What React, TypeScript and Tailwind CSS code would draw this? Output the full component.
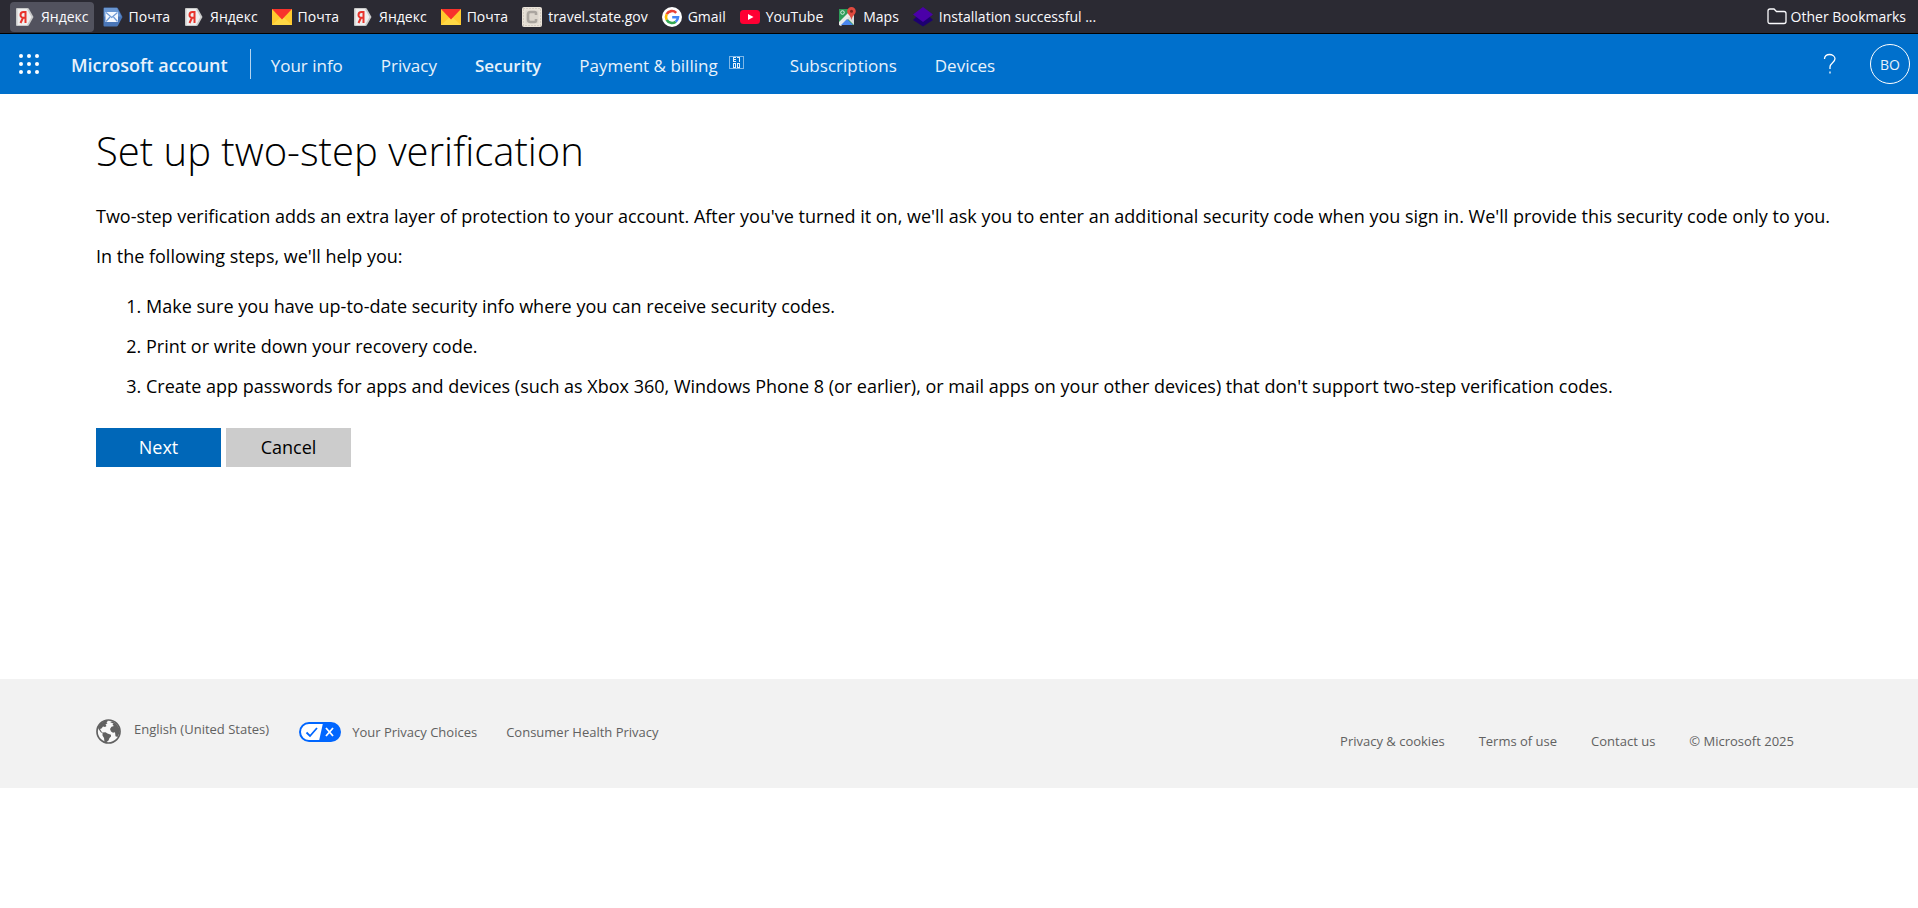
import type { ReactNode } from "react";

const Yandex = () => (
  <svg viewBox="0 0 20 20" className="size-5">
    <path d="M2 1h10.500q1 0 1.500 1l4.500 8-4.500 8q-.5 1-1.500 1H2q-1 0-1-1V2q0-1 1-1Z" fill="#c9c9c9" />
    <path d="M2.500 2h9.500l4.500 8-4.500 8H2.500Z" fill="#efefef" />
    <path d="M10.500 4v12M10.500 5H8.500C4.500 5 4.500 10.800 8.500 10.800h2M8 10.800 5.500 16" fill="none" stroke="#e8332c" strokeWidth="2" />
  </svg>
);
const BlueMail = () => (
  <svg viewBox="0 0 20 20" className="size-5">
    <path d="M1.500 0.500h12q1 0 1.500 1l4.500 8.500L15 18.500q-.5 1-1.500 1h-12q-1 0-1-1v-17q0-1 1-1Z" fill="#4a76b8" />
    <path d="M1 1h13l4 8.500H1Z" fill="#6a96d2" />
    <path d="M2.500 5h12.500v10H2.500Z" fill="#f4f8ff" />
    <path d="m3 5.500 5.750 5L14.500 5.500M3 14.500l4-4.500M14.500 14.500l-4-4.500" fill="none" stroke="#6f9ad6" strokeWidth="1.200" />
  </svg>
);
const YellowMail = () => (
  <svg viewBox="0 0 20 20" className="size-5">
    <path d="M0 2h20v16H0Z" fill="#ffc92e" />
    <path d="M0 18 10 9l10 9Z" fill="#ffd845" />
    <path d="M0 2h20L10 12.500Z" fill="#f8322c" />
  </svg>
);
const TravelC = () => (
  <svg viewBox="0 0 20 20" className="size-5">
    <rect width="20" height="20" rx="2" fill="#e9e2d8" />
    <rect x="1.500" y="1.500" width="17" height="17" fill="none" stroke="#bcb4aa" strokeDasharray="1 2" />
    <rect x="3.500" y="3.500" width="13" height="13" fill="#dcd6cd" />
    <path d="M14 8V6.500Q14 5 12.500 5h-4Q6 5 6 7.500v5Q6 15 8.500 15h4q1.500 0 1.500-1.500V12" fill="none" stroke="#aaa59f" strokeWidth="2.600" />
  </svg>
);
const Google = () => (
  <svg viewBox="0 0 20 20" className="size-5">
    <circle cx="10" cy="10" r="10" fill="#fff" />
    <g fill="none" strokeWidth="2.600">
      <path d="M14.200 5.800A6 6 0 0 0 4.700 7.200" stroke="#ea4335" />
      <path d="M4.700 7.200a6 6 0 0 0 0 5.600" stroke="#fbbc05" />
      <path d="M4.700 12.800a6 6 0 0 0 9 1.900" stroke="#34a853" />
      <path d="M13.700 14.700A6 6 0 0 0 16 10.300h-5.800" stroke="#4285f4" />
    </g>
  </svg>
);
const YouTube = () => (
  <svg viewBox="0 0 20 20" className="size-5">
    <rect y="3" width="20" height="14" rx="3.500" fill="#ff0033" />
    <path d="m8 7 5.500 3L8 13Z" fill="#fff" />
  </svg>
);
const Maps = () => (
  <svg viewBox="0 0 20 20" className="size-5">
    <path d="M2 2h15v16H2Z" fill="#2e9c59" />
    <path d="M2 15 15 2l3 3L4 19l-2-1Z" fill="#e9ebea" />
    <path d="m10 11 7 7V8Z" fill="#dadcdc" />
    <path d="m4 18 6-6 6 6Z" fill="#4a86ee" />
    <circle cx="5.500" cy="5.500" r="1.800" fill="none" stroke="#d9f0e1" />
    <path d="M14.500 0a4.300 4.300 0 0 0-4.300 4.300c0 3 3.600 4.200 4.300 8.700.7-4.500 4.300-5.700 4.300-8.700A4.300 4.300 0 0 0 14.500 0Z" fill="#e04a3f" />
    <circle cx="14.500" cy="4.300" r="1.500" fill="#7b231e" />
  </svg>
);
const Layers = () => (
  <svg viewBox="0 0 20 20" className="size-5">
    <path d="m0 13 10 6.500L20 13l-3-3H3Z" fill="#1d0070" />
    <path d="M10 0 20 7.500 10 15 0 7.500Z" fill="#4a00a8" />
  </svg>
);

const bookmarks: { icon: ReactNode; label: string; active?: boolean }[] = [
  { icon: <Yandex />, label: "Яндекс", active: true },
  { icon: <BlueMail />, label: "Почта" },
  { icon: <Yandex />, label: "Яндекс" },
  { icon: <YellowMail />, label: "Почта" },
  { icon: <Yandex />, label: "Яндекс" },
  { icon: <YellowMail />, label: "Почта" },
  { icon: <TravelC />, label: "travel.state.gov" },
  { icon: <Google />, label: "Gmail" },
  { icon: <YouTube />, label: "YouTube" },
  { icon: <Maps />, label: "Maps" },
  { icon: <Layers />, label: "Installation successful ..." },
];

const steps = [
  "Make sure you have up-to-date security info where you can receive security codes.",
  "Print or write down your recovery code.",
  "Create app passwords for apps and devices (such as Xbox 360, Windows Phone 8 (or earlier), or mail apps on your other devices) that don't support two-step verification codes.",
];

const Missing = () => (
  <svg viewBox="0 0 15 13" className="mr-2 mb-[6px] h-[13px] w-[15px]" fill="none" stroke="#e6f1fb" shapeRendering="crispEdges">
    <path d="M.5.5h14v12H.5Z" stroke="#7fb7e6" />
    <path d="M7 1.500H4.500v4H7M5 3.500h1.500M8 1.500h2.500V6M4.500 7.500h2v4h-2ZM8.500 7.500h2v4h-2Z" />
  </svg>
);

const Globe = () => (
  <svg viewBox="0 0 25 25" className="size-[25px]">
    <circle cx="12.500" cy="12.500" r="11.500" fill="#f8f8f8" stroke="#616161" strokeWidth="1.700" />
    <path d="M2 8.500 4.500 4.500 9 1.500l3 .2-1.500 1.800 1 .8-2 1.200 1 1.500-1.500 1L7 7.500 5.500 9.500 4 10l1.500 2.500L7 14l-2-.5-2.500-3.500ZM6.500 13.500l3-.3 2 1.300 3.500 1.200v1.800l-1.500 1.500-1 2.500-2.500 2-1.500-.5-.5-4-1.500-2.500ZM14 3l2.500-.8 3.500 2.300 3 4.500.5 5-2 4-2-.8-.5-4-2 .5-2-1.200-1-2.500 1.500-2.300 2.500-.7-1.500-1.200 1-1.300-1.500-.5Z" fill="#616161" />
  </svg>
);

const Choices = () => (
  <svg viewBox="0 0 42 20" className="h-5 w-[42px]" fill="none">
    <rect x="1" y="1" width="40" height="18" rx="9" fill="#fff" stroke="#0066ff" strokeWidth="2" />
    <path d="M24 1h8a9 9 0 0 1 0 18H20Z" fill="#0066ff" />
    <path d="m7.500 10.500 3.500 3.500 7-8" stroke="#0066ff" strokeWidth="1.800" />
    <path d="m27 6 7 8M34 6l-7 8" stroke="#fff" strokeWidth="1.800" />
  </svg>
);

const navLink = "whitespace-nowrap hover:underline";

export default function App() {
  return (
    <div className="min-h-screen bg-white font-['Open_Sans','Noto_Sans',sans-serif] text-black">
      <nav aria-label="Bookmarks" className="flex h-[34px] items-center justify-between border-b border-black bg-[#2b2a33] pr-3 pl-[10px] text-[14px] text-[#fbfbfe]">
        <div className="flex items-center gap-1">
          {bookmarks.map((b, i) => (
            <a key={i} href="#" className={`flex h-[30px] items-center gap-[6px] rounded px-[5px] whitespace-nowrap ${b.active ? "bg-[#52525e]" : ""}`}>
              {b.icon}
              {b.label}
            </a>
          ))}
        </div>
        <a href="#" className="flex items-center gap-1 whitespace-nowrap">
          <svg viewBox="0 0 20 20" className="size-5" fill="none" stroke="#fbfbfe" strokeWidth="1.300">
            <path d="M1 14.500V4q0-2 2-2h4l2.500 2.500H17q2 0 2 2v8q0 2-2 2H3q-2 0-2-2Z" />
          </svg>
          Other Bookmarks
        </a>
      </nav>

      <header className="flex h-[60px] items-center bg-[#0070cc] pr-2 pl-[19px] text-[17px] text-[#e8f2fb]">
        <button type="button" aria-label="App launcher" className="mr-8">
          <svg viewBox="0 0 20 20" className="size-5" fill="#fff">
            {[2, 10, 18].map((y) => [2, 10, 18].map((x) => <circle key={`${x}-${y}`} cx={x} cy={y} r="2" />))}
          </svg>
        </button>
        <a href="#" className="pt-[3px] text-[18px] font-semibold whitespace-nowrap">Microsoft account</a>
        <span className="mr-5 ml-[22px] h-[30px] w-px bg-[#b3d4f0]" />
        <nav aria-label="Account" className="flex items-center gap-[38px] pt-[3px]">
          <a href="#" className={navLink}>Your info</a>
          <a href="#" className={navLink}>Privacy</a>
          <a href="#" className={`${navLink} font-semibold`}>Security</a>
          <a href="#" className={`${navLink} flex items-center gap-[11px]`}>Payment &amp; billing <Missing /></a>
          <a href="#" className={navLink}>Subscriptions</a>
          <a href="#" className={navLink}>Devices</a>
        </nav>
        <div className="ml-auto flex items-center gap-[33px]">
          <button type="button" aria-label="Help">
            <svg viewBox="0 0 14 22" className="h-[22px] w-[14px]" fill="none" stroke="#fff" strokeWidth="1.300">
              <path d="M1.500 6C1.500 2.800 3.700 1.500 6.500 1.500S12 3.200 12 5.800C12 9.500 7 10 7 14v2M7 18.500v2" />
            </svg>
          </button>
          <button type="button" className="size-10 rounded-full border border-white text-[14px]">BO</button>
        </div>
      </header>

      <main className="min-h-[585px] pt-8 pr-20 pl-24 text-[18px]">
        <h1 className="text-[40px] leading-[50px] font-light">Set up two-step verification</h1>
        <p className="mt-5 leading-10">
          Two-step verification adds an extra layer of protection to your account. After you've turned it on, we'll ask you to enter an additional security code when you sign in. We'll provide this security code only to you.
        </p>
        <p className="leading-10">In the following steps, we'll help you:</p>
        <ol className="mt-[10px] list-decimal pl-[50px] leading-10">
          {steps.map((s) => (
            <li key={s}>{s}</li>
          ))}
        </ol>
        <div className="mt-[22px] flex gap-[5px]">
          <button type="button" className="h-[39px] w-[125px] bg-[#0067b8] text-white">Next</button>
          <button type="button" className="h-[39px] w-[125px] bg-[#cccccc]">Cancel</button>
        </div>
      </main>

      <footer className="flex min-h-[109px] items-start justify-between bg-[#f2f2f2] pr-[124px] pl-24 text-[13px] leading-5 text-[#616161]">
        <div className="flex items-start gap-[30px] pt-10">
          <a href="#" className="flex items-start gap-[13px] whitespace-nowrap"><Globe />English (United States)</a>
          <div className="flex items-start gap-[29px] pt-[3px]">
            <a href="#" className="flex items-center gap-[11px] whitespace-nowrap"><Choices />Your Privacy Choices</a>
            <a href="#" className="whitespace-nowrap">Consumer Health Privacy</a>
          </div>
        </div>
        <div className="flex gap-[34px] pt-[52px] whitespace-nowrap">
          <a href="#">Privacy &amp; cookies</a>
          <a href="#">Terms of use</a>
          <a href="#">Contact us</a>
          <span>© Microsoft 2025</span>
        </div>
      </footer>
    </div>
  );
}
